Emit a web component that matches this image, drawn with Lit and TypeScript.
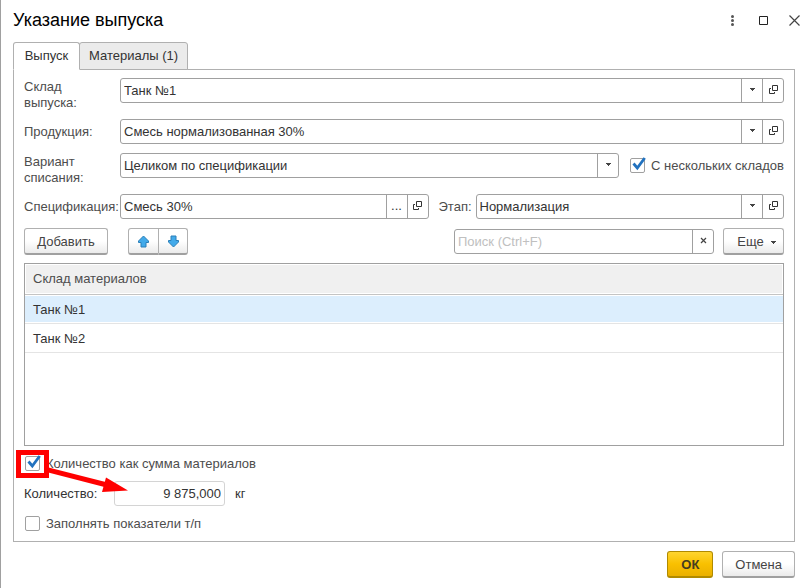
import { LitElement, html, css, nothing } from "lit";
import { customElement, state } from "lit/decorators.js";
import { classMap } from "lit/directives/class-map.js";

const caret = html`<svg class="caret" width="5" height="3" viewBox="0 0 5 3" aria-hidden="true">
  <path d="M0 0h5v1H0z M1 1h3v1H1z M2 2h1v1H2z" fill="#444" shape-rendering="crispEdges" />
</svg>`;

const openIcon = html`<svg width="9" height="9" viewBox="0 0 9 9" aria-hidden="true">
  <path d="M3.5 0.5h5v5h-5z M2 3.5H0.5v5h5V7" fill="none" stroke="#333" />
</svg>`;

const arrowShape = "M6.5 1L11.5 6V7.5H9V12H4V7.5H1.5V6z";

@customElement("app-root")
export class AppRoot extends LitElement {
  @state() private tab = 0;
  @state() private selected = 0;
  private tabs = ["Выпуск", "Материалы (1)"];
  private stores = ["Танк №1", "Танк №2"];

  static styles = css`
    :host {
      display: block;
      font: 13px/16px "Liberation Sans", Arial, sans-serif;
      color: #333;
      background: #fff;
    }
    * { box-sizing: border-box; }
    button, input, select { font: inherit; color: inherit; margin: 0; }
    .window {
      display: flex;
      flex-direction: column;
      min-height: 100vh;
      padding: 8px 16px 10px 12px;
      border-left: 1px solid #a0a0a0;
    }
    .titlebar { display: flex; align-items: center; height: 24px; margin-bottom: 10px; }
    h1 { flex: 1; margin: 0; font-size: 18px; line-height: 24px; font-weight: 400; color: #000; }
    .winbtns { display: flex; margin-right: -15px; }
    .winbtns button {
      display: flex; align-items: center; justify-content: center;
      width: 31px; height: 23px; padding: 0; border: 0; background: none;
    }
    .tabs { display: flex; }
    .tab {
      height: 28px; min-width: 67px; padding: 0 9px; margin-bottom: -1px;
      border: 1px solid #b0b0b0; background: #ebebeb;
      border-radius: 3px 3px 0 0; position: relative;
    }
    .tab + .tab { margin-left: -1px; }
    .tab.on { background: #fff; border-bottom-color: #fff; z-index: 1; }
    .panel {
      flex: 1; display: flex; flex-direction: column; gap: 8px;
      border: 1px solid #b0b0b0; padding: 8px 10px;
    }
    .row { display: flex; align-items: flex-start; min-height: 26px; }
    .lbl { width: 96px; padding-top: 1px; color: #4d4d4d; }
    .lbl.one { padding-top: 5px; }
    .lbl.mid { width: 47px; padding: 5px 0 0 10px; }
    .field {
      flex: 1; display: flex; min-width: 0; height: 25px;
      border: 1px solid #a0a0a0; border-radius: 3px; background: #fff;
    }
    .field input, .field select {
      flex: 1; width: 0; min-width: 0; height: 23px; padding: 0 3px; border: 0;
      background: none; outline: none; appearance: none;
    }
    .field input::placeholder { color: #c0c0c0; opacity: 1; }
    .cell {
      display: flex; align-items: center; justify-content: center;
      width: 21px; height: 23px; padding: 0 0 2px; border: 0;
      border-left: 1px solid #a0a0a0; background: none;
    }
    .combo { flex: 1; display: grid; grid-template-columns: 1fr 21px; min-width: 0; }
    .combo select { grid-area: 1 / 1 / 2 / 3; width: 100%; }
    .combo .cell { grid-area: 1 / 2; pointer-events: none; }
    .check { display: flex; align-items: center; gap: 6px; height: 19px; padding-left: 1px; color: #4d4d4d; }
    .row .check { height: 25px; padding-left: 11px; }
    .box { position: relative; display: block; width: 15px; height: 15px; }
    .box input {
      appearance: none; display: block; width: 15px; height: 15px;
      border: 1px solid #a0a0a0; border-radius: 2px; background: #fff;
    }
    .box svg { position: absolute; left: 0; top: -2px; display: none; pointer-events: none; }
    .box input:checked + svg { display: block; }
    .tools { display: flex; height: 27px; align-items: flex-start; }
    .btn {
      display: flex; align-items: center; justify-content: center;
      height: 27px; padding: 2px 12px 0; border: 1px solid #b0b0b0;
      border-bottom: 2px solid #a0a0a0; border-radius: 3px; color: #444;
      background: linear-gradient(#fff 50%, #ebebeb);
    }
    .btn.add { min-width: 84px; }
    .btn.more { min-width: 61px; padding: 2px 6px 0 12px; gap: 7px; margin-left: 9px; }
    .pair { display: flex; margin-left: 20px; }
    .pair .btn { width: 29px; padding: 0; }
    .pair .btn:first-child { width: 31px; border-radius: 3px 0 0 3px; }
    .pair .btn:last-child { border-radius: 0 3px 3px 0; border-left: 0; }
    .search { flex: 0 1 260px; margin: 1px 0 0 auto; }
    .grid { flex: 1; min-height: 120px; border: 1px solid #a0a0a0; }
    table { width: 100%; border-collapse: separate; border-spacing: 0; }
    th {
      height: 31px; padding: 0 8px; text-align: left; font-weight: 400; color: #4d4d4d;
      background: #f0f0f0; border-bottom: 1px solid #c4c4c4; box-shadow: inset 0 0 0 1px #fff;
    }
    td { height: 29px; padding: 2px 8px 0; border-bottom: 1px solid #e4e4e4; }
    tr.sel td { background: #dceefd; box-shadow: inset 0 1px #fff, inset 0 -1px #fff; }
    .sum { position: relative; }
    .mark { position: absolute; left: -10px; top: -6px; pointer-events: none; }
    .qty { display: flex; align-items: center; height: 25px; }
    .qty label { width: 90px; }
    .qty .field { flex: 0 0 111px; border-color: #d4d4d4; margin-right: 10px; }
    .qty input { text-align: right; }
    .foot { display: flex; justify-content: flex-end; gap: 9px; margin-top: 9px; }
    .btn.ok {
      min-width: 46px; font-weight: 700; border-color: #b08a00; color: #443c20;
      background: linear-gradient(#ffd530, #f9c000 50%, #eab000);
    }
  `;

  private combo(id: string, value: string, open: boolean) {
    return html`<div class="field">
      <div class="combo">
        <select id=${id}><option>${value}</option></select>
        <span class="cell">${caret}</span>
      </div>
      ${open ? html`<button class="cell" aria-label="Открыть">${openIcon}</button>` : nothing}
    </div>`;
  }

  private check(text: string, checked: boolean) {
    return html`<label class="check">
      <span class="box">
        <input type="checkbox" .checked=${checked} />
        <svg width="17" height="16" viewBox="0 0 17 16" aria-hidden="true">
          <path d="M3.5 7.5L7.3 12L14.7 2" fill="none" stroke="#2272bf" stroke-width="2.8" />
        </svg>
      </span>${text}</label>`;
  }

  render() {
    return html`<div class="window">
      <header class="titlebar">
        <h1>Указание выпуска</h1>
        <div class="winbtns">
          <button aria-label="Меню"><svg width="3" height="11" viewBox="0 0 3 11">
            <g fill="#555"><circle cx="1.5" cy="1.5" r="1.5" /><circle cx="1.5" cy="5.5" r="1.5" /><circle cx="1.5" cy="9.5" r="1.5" /></g></svg></button>
          <button aria-label="Развернуть"><svg width="9" height="9" viewBox="0 0 9 9">
            <path d="M.5 .5h8v8h-8z" fill="none" stroke="#222" /></svg></button>
          <button aria-label="Закрыть"><svg width="11" height="11" viewBox="0 0 11 11">
            <path d="M.5 .5L10.5 10.5M10.5 .5L.5 10.5" stroke="#444" stroke-width="1.2" /></svg></button>
        </div>
      </header>
      <div class="tabs" role="tablist">
        ${this.tabs.map((t, i) => html`<button role="tab" aria-selected=${this.tab === i}
          class=${classMap({ tab: true, on: this.tab === i })} @click=${() => (this.tab = i)}>${t}</button>`)}
      </div>
      <main class="panel">
        <div class="row">
          <label class="lbl" for="store">Склад<br />выпуска:</label>
          ${this.combo("store", "Танк №1", true)}
        </div>
        <div class="row">
          <label class="lbl one" for="product">Продукция:</label>
          ${this.combo("product", "Смесь нормализованная 30%", true)}
        </div>
        <div class="row">
          <label class="lbl" for="variant">Вариант<br />списания:</label>
          ${this.combo("variant", "Целиком по спецификации", false)}
          ${this.check("С нескольких складов", true)}
        </div>
        <div class="row">
          <label class="lbl one" for="spec">Спецификация:</label>
          <div class="field">
            <input id="spec" type="text" value="Смесь 30%" />
            <button class="cell" aria-label="Выбрать">...</button>
            <button class="cell" aria-label="Открыть">${openIcon}</button>
          </div>
          <label class="lbl mid" for="stage">Этап:</label>
          ${this.combo("stage", "Нормализация", true)}
        </div>
        <div class="tools">
          <button class="btn add">Добавить</button>
          <div class="pair">
            <button class="btn" aria-label="Вверх"><svg width="13" height="13" viewBox="0 0 13 13">
              <path d=${arrowShape} fill="#42aaea" stroke="#2a7fb8" /></svg></button>
            <button class="btn" aria-label="Вниз"><svg width="13" height="13" viewBox="0 0 13 13">
              <path d=${arrowShape} transform="rotate(180 6.5 6.5)" fill="#42aaea" stroke="#2a7fb8" /></svg></button>
          </div>
          <div class="field search">
            <input type="text" placeholder="Поиск (Ctrl+F)" aria-label="Поиск" />
            <button class="cell" aria-label="Очистить"><svg width="7" height="7" viewBox="0 0 7 7">
              <path d="M1 1L6 6M6 1L1 6" stroke="#444" stroke-width="1.2" /></svg></button>
          </div>
          <button class="btn more">Еще ${caret}</button>
        </div>
        <div class="grid">
          <table>
            <thead><tr><th>Склад материалов</th></tr></thead>
            <tbody>
              ${this.stores.map((s, i) => html`<tr class=${classMap({ sel: this.selected === i })}
                @click=${() => (this.selected = i)}><td>${s}</td></tr>`)}
            </tbody>
          </table>
        </div>
        <div class="sum">
          ${this.check("Количество как сумма материалов", true)}
          <svg class="mark" width="116" height="46" viewBox="0 0 116 46" aria-hidden="true">
            <path d="M4.5 4.5h28v23h-28z" fill="none" stroke="#f00" stroke-width="5" />
            <path d="M32 21.3L91 36.5" stroke="#f00" stroke-width="5" />
            <path d="M92 29.5L114 42.5L88 44z" fill="#f00" />
          </svg>
        </div>
        <div class="qty">
          <label for="qty">Количество:</label>
          <div class="field"><input id="qty" type="text" value="9 875,000" /></div>
          <span>кг</span>
        </div>
        ${this.check("Заполнять показатели т/п", false)}
      </main>
      <footer class="foot">
        <button class="btn ok">ОК</button>
        <button class="btn">Отмена</button>
      </footer>
    </div>`;
  }
}
